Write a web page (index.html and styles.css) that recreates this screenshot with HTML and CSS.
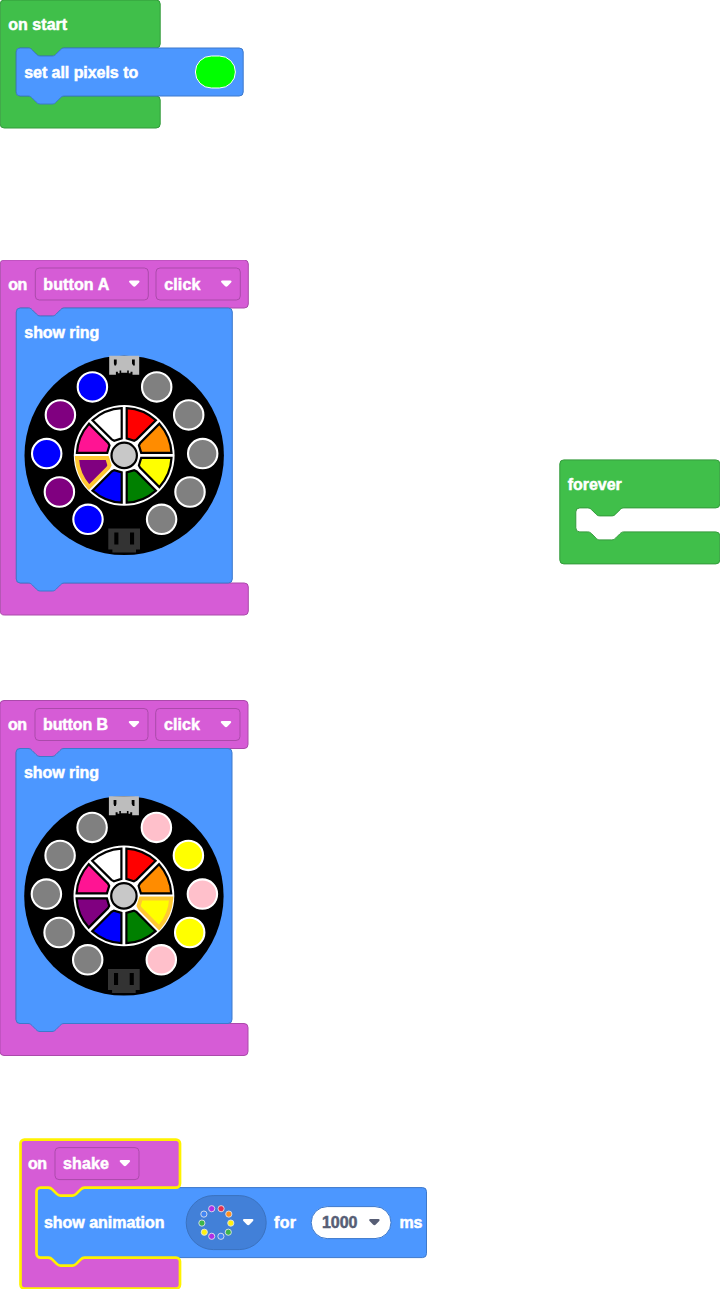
FILE: index.html
```html
<!DOCTYPE html>
<html lang="en">
<head>
<meta charset="utf-8">
<title>Blocks</title>
<link rel="stylesheet" href="styles.css">
</head>
<body>
<main class="workspace">

<svg class="defs" width="0" height="0" aria-hidden="true">
  <defs>
    <path id="caret" d="M1.2,0.5 H9.2 C10.6,0.5 10.8,1.6 10,2.4 L6.6,6 Q5.2,7.3 3.8,6 L0.4,2.4 C-0.4,1.6 -0.2,0.5 1.2,0.5 Z"/>
    <path id="wedge-a" d="M2.5,-47.3 A47.4,47.4 0 0 1 31.7,-35.2 L12.5,-16 L10,-14.7 L2.5,-17 Z"/>
    <path id="wedge-b" d="M47.3,-2.5 A47.4,47.4 0 0 0 35.2,-31.7 L16,-12.5 L14.7,-10 L17,-2.5 Z"/>
    <g id="board">
      <circle r="99.7"/>
      <path fill="#bdbdbd" d="M-15,-99.6 H15 V-80.6 H8.3 V-83.6 H6.3 V-82.2 H4.6 V-84.9 H3 V-82.6 H-3 V-84.9 H-4.6 V-82.2 H-6.3 V-83.6 H-8.3 V-80.6 H-15 Z"/>
      <path d="M-10.3,-96 h2.8 v4 l-0.7,2.2 h-1.5 l-0.6,-2.2 Z M7.8,-96 h2.8 v6.2 h-1.6 l-1.2,-2.2 Z"/>
      <path fill="#333" d="M-15.9,73.2 H15.8 V94.2 H11.8 V97 H-11.8 V94.2 H-15.9 Z"/>
      <path d="M-9.9,77 h4.1 v12 h-4.1 Z M5.8,77 h4.1 v12 h-4.1 Z"/>
      <circle r="50.4" fill="#fff"/>
      <g class="wedges">
        <use href="#wedge-a" fill="#f00"/>
        <use href="#wedge-b" fill="#ff8c00"/>
        <use href="#wedge-a" fill="#ff0" transform="rotate(90)"/>
        <use href="#wedge-b" fill="#008000" transform="rotate(90)"/>
        <use href="#wedge-a" fill="#00f" transform="rotate(180)"/>
        <use href="#wedge-b" fill="#800080" transform="rotate(180)"/>
        <use href="#wedge-a" fill="#ff1493" transform="rotate(270)"/>
        <use href="#wedge-b" fill="#fff" transform="rotate(270)"/>
        <circle r="12.7" fill="#c8c8c8"/>
      </g>
    </g>
    <g id="ring-event">
      <path class="event" d="M0,4 A4,4 0 0 1 4,0 H244 A4,4 0 0 1 248,4 V44 A4,4 0 0 1 244,48 H64 c-2,0 -3,1 -4,2 l-4,4 c-1,1 -2,2 -4,2 h-12 c-2,0 -3,-1 -4,-2 l-4,-4 c-1,-1 -2,-2 -4,-2 H20 A4,4 0 0 0 16,52 V319 A4,4 0 0 0 20,323 H244 A4,4 0 0 1 248,327 V351 A4,4 0 0 1 244,355 H4 A4,4 0 0 1 0,351 Z"/>
      <path class="light" d="M16,52 A4,4 0 0 1 20,48 H28 c2,0 3,1 4,2 l4,4 c1,1 2,2 4,2 h12 c2,0 3,-1 4,-2 l4,-4 c1,-1 2,-2 4,-2 H228 A4,4 0 0 1 232,52 V319 A4,4 0 0 1 228,323 H64 c-2,0 -3,1 -4,2 l-4,4 c-1,1 -2,2 -4,2 h-12 c-2,0 -3,-1 -4,-2 l-4,-4 c-1,-1 -2,-2 -4,-2 H20 A4,4 0 0 1 16,319 Z"/>
      <rect class="event" x="35" y="8" width="113" height="32" rx="4"/>
      <rect class="event" x="155.7" y="8" width="84.3" height="32" rx="4"/>
      <use href="#caret" x="128.8" y="20" fill="#fff"/>
      <use href="#caret" x="220.8" y="20" fill="#fff"/>
    </g>
  </defs>
</svg>

<svg class="block on-start" width="250" height="134" viewBox="-0.2 0 250 134">
  <path class="loop" d="M0,4 A4,4 0 0 1 4,0 H156 A4,4 0 0 1 160,4 V44 A4,4 0 0 1 156,48 H64 c-2,0 -3,1 -4,2 l-4,4 c-1,1 -2,2 -4,2 h-12 c-2,0 -3,-1 -4,-2 l-4,-4 c-1,-1 -2,-2 -4,-2 H20 A4,4 0 0 0 16,52 V92 A4,4 0 0 0 20,96 H156 A4,4 0 0 1 160,100 V124 A4,4 0 0 1 156,128 H4 A4,4 0 0 1 0,124 Z"/>
  <path class="light" d="M16,52 A4,4 0 0 1 20,48 H28 c2,0 3,1 4,2 l4,4 c1,1 2,2 4,2 h12 c2,0 3,-1 4,-2 l4,-4 c1,-1 2,-2 4,-2 H239 A4,4 0 0 1 243,52 V92 A4,4 0 0 1 239,96 H64 c-2,0 -3,1 -4,2 l-4,4 c-1,1 -2,2 -4,2 h-12 c-2,0 -3,-1 -4,-2 l-4,-4 c-1,-1 -2,-2 -4,-2 H20 A4,4 0 0 1 16,92 Z"/>
  <rect x="195.2" y="56" width="40" height="32" rx="16" fill="#0f0" stroke="#fff"/>
  <text x="8" y="30" textLength="59">on start</text>
  <text x="24" y="78" textLength="114">set all pixels to</text>
</svg>

<svg class="block button-a" width="250" height="360" viewBox="-0.3 0 250 360">
  <use href="#ring-event"/>
  <text x="8" y="30" textLength="19">on</text>
  <text x="43" y="30" textLength="66">button A</text>
  <text x="164" y="30" textLength="36">click</text>
  <text x="24" y="78" textLength="75">show ring</text>
  <g transform="translate(123.9,195.4)">
    <use href="#board"/>
    <use class="selected" href="#wedge-b" fill="#800080" transform="rotate(180)"/>
    <g class="leds">
      <circle cx="32.5" cy="-68.5" r="14.7" fill="#808080"/>
      <circle cx="64.5" cy="-40.5" r="14.7" fill="#808080"/>
      <circle cx="78.5" cy="-1.8" r="14.7" fill="#808080"/>
      <circle cx="65.8" cy="36.6" r="14.7" fill="#808080"/>
      <circle cx="37.4" cy="63.9" r="14.7" fill="#808080"/>
      <circle cx="-36.2" cy="63.9" r="14.7" fill="#00f"/>
      <circle cx="-64.8" cy="36.6" r="14.7" fill="#800080"/>
      <circle cx="-77.5" cy="-1.8" r="14.7" fill="#00f"/>
      <circle cx="-63.8" cy="-40.5" r="14.7" fill="#800080"/>
      <circle cx="-31.8" cy="-68.5" r="14.7" fill="#00f"/>
    </g>
  </g>
</svg>

<svg class="block button-b" width="250" height="360" viewBox="0 -0.5 250 360">
  <use href="#ring-event"/>
  <text x="8" y="29.5" textLength="19">on</text>
  <text x="43" y="29.5" textLength="65">button B</text>
  <text x="164" y="29.5" textLength="36">click</text>
  <text x="24" y="77.5" textLength="75">show ring</text>
  <g transform="translate(123.9,195.4)">
    <use href="#board"/>
    <use class="selected" href="#wedge-a" fill="#ff0" transform="rotate(90)"/>
    <g class="leds">
      <circle cx="32.5" cy="-68.5" r="14.7" fill="#ffc0cb"/>
      <circle cx="64.5" cy="-40.5" r="14.7" fill="#ff0"/>
      <circle cx="78.5" cy="-1.8" r="14.7" fill="#ffc0cb"/>
      <circle cx="65.8" cy="36.6" r="14.7" fill="#ff0"/>
      <circle cx="37.4" cy="63.9" r="14.7" fill="#ffc0cb"/>
      <circle cx="-36.2" cy="63.9" r="14.7" fill="#808080"/>
      <circle cx="-64.8" cy="36.6" r="14.7" fill="#808080"/>
      <circle cx="-77.5" cy="-1.8" r="14.7" fill="#808080"/>
      <circle cx="-63.8" cy="-40.5" r="14.7" fill="#808080"/>
      <circle cx="-31.8" cy="-68.5" r="14.7" fill="#808080"/>
    </g>
  </g>
</svg>

<svg class="block forever" width="161" height="106" viewBox="-0.8 -0.9 161 106">
  <path class="loop" d="M0,4 A4,4 0 0 1 4,0 H156 A4,4 0 0 1 160,4 V44 A4,4 0 0 1 156,48 H64 c-2,0 -3,1 -4,2 l-4,4 c-1,1 -2,2 -4,2 h-12 c-2,0 -3,-1 -4,-2 l-4,-4 c-1,-1 -2,-2 -4,-2 H20 A4,4 0 0 0 16,52 V68 A4,4 0 0 0 20,72 H28 c2,0 3,1 4,2 l4,4 c1,1 2,2 4,2 h12 c2,0 3,-1 4,-2 l4,-4 c1,-1 2,-2 4,-2 H156 A4,4 0 0 1 160,76 V100 A4,4 0 0 1 156,104 H4 A4,4 0 0 1 0,100 Z"/>
  <text x="8" y="30" textLength="54">forever</text>
</svg>

<svg class="block on-shake" width="412" height="153" viewBox="-2.5 -2.6 412 153">
  <path class="light" d="M16,52 A4,4 0 0 1 20,48 H402 A4,4 0 0 1 406,52 V114 A4,4 0 0 1 402,118 H64 L56,126 H40 L28,118 H20 A4,4 0 0 1 16,114 Z"/>
  <path class="event chosen" d="M0,4 A4,4 0 0 1 4,0 H155.5 A4,4 0 0 1 159.5,4 V44 A4,4 0 0 1 155.5,48 H64 c-2,0 -3,1 -4,2 l-4,4 c-1,1 -2,2 -4,2 h-12 c-2,0 -3,-1 -4,-2 l-4,-4 c-1,-1 -2,-2 -4,-2 H20 A4,4 0 0 0 16,52 V114 A4,4 0 0 0 20,118 H28 c2,0 3,1 4,2 l4,4 c1,1 2,2 4,2 h12 c2,0 3,-1 4,-2 l4,-4 c1,-1 2,-2 4,-2 H155.5 A4,4 0 0 1 159.5,122 V145 A4,4 0 0 1 155.5,149 H4 A4,4 0 0 1 0,145 Z"/>
  <rect class="event" x="34.5" y="8" width="84" height="32" rx="4"/>
  <use href="#caret" x="99.2" y="20" fill="#fff"/>
  <rect x="165.7" y="56" width="80" height="54" rx="27" fill="#4280d8" stroke="#3b72bf"/>
  <g class="dots">
    <circle cx="191.2" cy="69.1" r="3.1" fill="#b02ee6"/>
    <circle cx="200.6" cy="69.1" r="3.1" fill="#e6304f"/>
    <circle cx="208.3" cy="74.5" r="3.1" fill="#ff8f20"/>
    <circle cx="210.3" cy="83.5" r="3.1" fill="#fff010"/>
    <circle cx="207.8" cy="92.6" r="3.1" fill="#3eb549"/>
    <circle cx="200.4" cy="96.7" r="3.1" fill="#4285f4"/>
    <circle cx="191.2" cy="96.7" r="3.1" fill="#b02ee6"/>
    <circle cx="183.8" cy="92.6" r="3.1" fill="#fff010"/>
    <circle cx="181.4" cy="83.5" r="3.1" fill="#3eb549"/>
    <circle cx="183.4" cy="74.5" r="3.1" fill="#4285f4"/>
  </g>
  <use href="#caret" x="222.5" y="79" fill="#fff"/>
  <rect x="290.7" y="67" width="79.8" height="32" rx="16" fill="#fff" stroke="#3d79cc"/>
  <use href="#caret" x="348.7" y="79" fill="#575e75"/>
  <text x="7.5" y="29.5" textLength="19">on</text>
  <text x="42.5" y="29.5" textLength="46">shake</text>
  <text x="23.5" y="88.5" textLength="120.5">show animation</text>
  <text x="253.5" y="88.5" textLength="22">for</text>
  <text class="number" x="301.5" y="88.5" textLength="35.5">1000</text>
  <text x="379" y="88.5" textLength="23">ms</text>
</svg>

</main>
</body>
</html>
```
FILE: styles.css
```css
body {
  margin: 0;
  background: #fff;
}

.workspace {
  position: relative;
  width: 720px;
  height: 1289px;
  overflow: hidden;
}

.defs {
  position: absolute;
}

/* Blocks sit freely on the workspace canvas */
.block {
  position: absolute;
  display: block;
}

.on-start { left: 0; top: 0; }
.button-a { left: 0; top: 260px; }
.button-b { left: 0; top: 700px; }
.forever { left: 559px; top: 459px; }
.on-shake { left: 18px; top: 1137px; }

.loop {
  fill: #40bf4a;
  stroke: #339a3b;
}

.light {
  fill: #4c97ff;
  stroke: #3d79cc;
}

.event {
  fill: #d65cd6;
  stroke: #ab4aab;
}

.chosen {
  stroke: #fff200;
  stroke-width: 2.7;
}

.wedges {
  stroke: #000;
  stroke-width: 2.2;
}

.selected {
  stroke: #ffc832;
  stroke-width: 4;
}

.leds {
  stroke: #fff;
  stroke-width: 2.1;
}

.dots {
  stroke: #dfe3ea;
  stroke-width: 0.9;
}

text {
  font: bold 16px "Liberation Sans", Arial, sans-serif;
  fill: #fff;
  stroke: #fff;
  stroke-width: 0.5;
}

.number {
  fill: #575e75;
  stroke: #575e75;
}
```
